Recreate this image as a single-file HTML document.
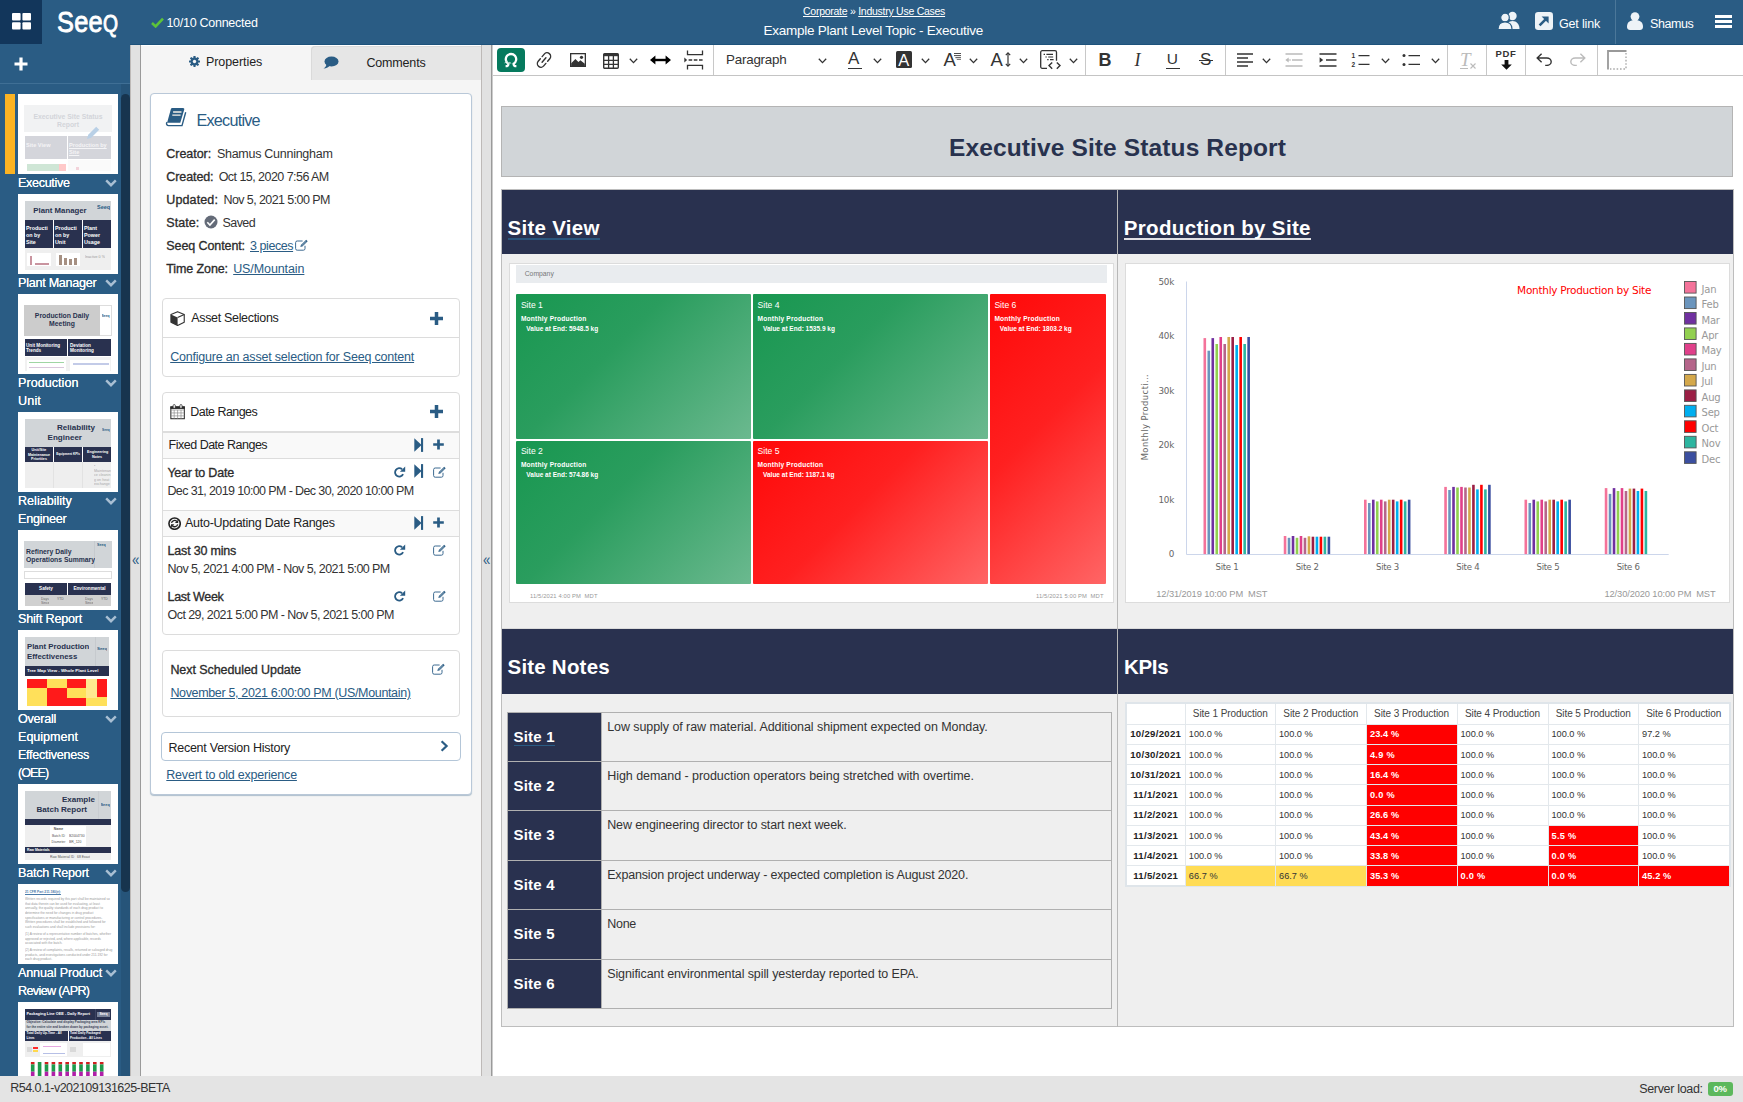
<!DOCTYPE html>
<html lang="en">
<head>
<meta charset="utf-8">
<title>Example Plant Level Topic - Executive</title>
<style>
*{box-sizing:border-box;margin:0;padding:0}
html,body{width:1743px;height:1102px;overflow:hidden;background:#fff}
body{font-family:"Liberation Sans",sans-serif;font-size:12.5px;letter-spacing:-0.27px;color:#333;position:relative}
.abs{position:absolute}
.t{position:absolute;white-space:nowrap;line-height:16px;height:16px}
a{color:inherit}
/* header */
#hdr{left:0;top:0;width:1743px;height:45px;background:#2a5c84;border-bottom:1px solid #1d527b}
#home{left:0;top:0;width:42px;height:44px;background:#12365b}
.hw{color:#fff}
/* sidebar */
#side{left:0;top:44px;width:130px;height:1033px;background:#2a5c84;overflow:hidden}

#side .th{letter-spacing:0;position:absolute;left:18px;width:100px;height:80px;background:#fff;overflow:hidden}
#side .lb{position:absolute;left:18px;width:90px;color:#fff;line-height:18px;font-size:12.6px;letter-spacing:-0.2px;white-space:nowrap;text-shadow:0 0 0.4px #fff}
#side .cv{position:absolute;left:105px;width:12px;height:8px}
.th div{position:absolute;overflow:hidden}
.th .g{background:#d1d5d8}
.th .n{background:#29314f;color:#fff;font-weight:bold}
.th .tt{color:#28324e;font-weight:bold;text-align:center;white-space:nowrap}
/* footer */
#foot{left:0;top:1076px;width:1743px;height:26px;background:#e4e4e4}
/* splitters */
.split{background:#e1e1e1;border-left:1px solid #bdb9b7;border-right:1px solid #9a9a9a}
/* panel */
#panel{left:141px;top:45px;width:340px;height:1032px;background:#f5f5f5}

#panel .t{font-size:12.5px}
.lk{color:#2a5c84;text-decoration:underline}
.b{font-weight:normal;color:#2b2b2b;-webkit-text-stroke:0.320px #2b2b2b}
.card{position:absolute;background:#fff;border:1px solid #dcdcdc;border-radius:4px}
.ic{position:absolute}
/* editor */
#editor{left:492px;top:45px;width:1251px;height:1032px;background:#fff;border-left:1px solid #ccc}
</style>
</head>
<body>
<div id="hdr" class="abs">
<div id="home" class="abs"></div>
<svg class="abs" style="left:12px;top:13px" width="19" height="17" viewBox="0 0 19 17"><g fill="#fff"><rect x="0" y="0" width="8.6" height="7.4" rx="1"/><rect x="10.4" y="0" width="8.6" height="7.4" rx="1"/><rect x="0" y="9.2" width="8.6" height="7.4" rx="1"/><rect x="10.4" y="9.2" width="8.6" height="7.4" rx="1"/></g></svg>
<div class="t" id="logo" style="left:56.800px;top:5.300px;height:34px;line-height:34px;font-size:30.200px;font-weight:normal;-webkit-text-stroke:0.900px #fff;color:#fff;letter-spacing:0.300px;transform-origin:0 0;transform:scaleX(0.840)">See<span style="font-size:23px;letter-spacing:0">Q</span></div>
<svg class="abs" style="left:150.500px;top:16.500px" width="13" height="11" viewBox="0 0 13 11"><path d="M1 6 L4.6 9.4 L12 1.6" fill="none" stroke="#5cc23a" stroke-width="2.6"/></svg>
<div class="t hw" style="left:166.400px;top:15px;--w:91.2px;letter-spacing:-0.268px">10/10 Connected</div>
<div class="t" style="left:803px;top:4px;font-size:10.500px;line-height:14px;height:14px;color:#fff;--w:142.100px;letter-spacing:-0.264px"><a style="text-decoration:underline">Corporate</a> » <a style="text-decoration:underline">Industry Use Cases</a></div>
<div class="t hw" style="left:763.500px;top:22.500px;font-size:13.500px;--w:219.6px;letter-spacing:-0.244px">Example Plant Level Topic - Executive</div>
<svg class="abs" style="left:1498px;top:11px" width="22" height="18" viewBox="0 0 22 18"><g fill="#eef3f7"><circle cx="14.5" cy="5" r="4.2"/><path d="M8.5 18c0-5 2-8 6-8s7 3 7 8z"/></g><g fill="#eef3f7" stroke="#2a5c84" stroke-width="1.2"><circle cx="7" cy="6.5" r="4.3"/><path d="M0 18.6c0-5 2.4-7.6 7-7.6s7 2.6 7 7.6z"/></g></svg>
<svg class="abs" style="left:1535px;top:12px" width="18" height="18" viewBox="0 0 18 18"><rect x="0" y="0" width="18" height="18" rx="3.2" fill="#eef3f7"/><path d="M4.6 13.4L11.6 6.4" stroke="#2a5c84" stroke-width="2.6" fill="none"/><path d="M6.6 4.4h7v7z" fill="#2a5c84"/></svg>
<div class="t hw" style="left:1559px;top:15.800px;--w:41.0px;letter-spacing:-0.174px">Get link</div>
<div class="abs" style="left:1615px;top:0;width:1px;height:44px;background:#4b7799"></div>
<svg class="abs" style="left:1627px;top:12px" width="16" height="18" viewBox="0 0 16 18"><g fill="#eef3f7"><circle cx="8" cy="4.6" r="4.4"/><path d="M0 15c0-5 3-7 8-7s8 2 8 7c0 2-1.5 3-3 3H3c-1.500 0-3-1-3-3z"/></g></svg>
<div class="t hw" style="left:1650px;top:15.800px;--w:43.4px;letter-spacing:-0.410px">Shamus</div>
<div class="abs" style="left:1715px;top:15px;width:17px;height:13px;border-top:3px solid #fff;border-bottom:3px solid #fff"><div style="margin-top:2px;height:3px;background:#fff"></div></div>
</div>
<div id="side" class="abs">
<svg class="abs" style="left:14px;top:13px" width="14" height="14" viewBox="0 0 14 14"><path d="M7 0.500v13M0.500 7h13" stroke="#fff" stroke-width="3.2"/></svg>
<div class="abs" style="left:0;top:39px;width:130px;height:1px;background:#3f6f95"></div>
<div class="abs" style="left:121px;top:40px;width:9px;height:993px;background:#265479"></div>
<div class="abs" style="left:121px;top:50px;width:9px;height:798px;background:#17344e;border-radius:5px 5px 5px 5px"></div>
<div class="abs" style="left:5px;top:50px;width:10px;height:80px;background:#fbb323"></div>
<div class="th" style="top:50px">
<div style="left:6px;top:11px;width:88px;height:27px;background:#f1f2f3"></div>
<div class="tt" style="left:6px;top:18.500px;width:88px;font-size:6.832px;line-height:8px;color:#d3d5da;white-space:normal">Executive Site Status Report</div>
<div style="left:7px;top:42px;width:42px;height:23px;background:#d4d5db"></div>
<div style="left:50px;top:42px;width:43px;height:23px;background:#d4d5db"></div>
<div style="left:8px;top:48px;font-size:5.612px;line-height:7px;color:#f4f4f6;font-weight:bold">Site View</div>
<div style="left:51px;top:48px;width:42px;font-size:5.612px;line-height:7px;color:#f4f4f6;font-weight:bold;text-decoration:underline">Production by Site</div>
<div style="left:9px;top:70px;width:32px;height:7px;background:#cfe6d6"></div>
<div style="left:41px;top:70px;width:7px;height:7px;background:#ffc9c9"></div>
<div style="left:50px;top:66px;width:43px;height:11px;background:#fafafa"></div>
<div style="left:58px;top:73px;width:3px;height:3px;background:#f3d3da"></div>
<svg style="position:absolute;left:68px;top:31px" width="15" height="15" viewBox="0 0 15 15"><path d="M1 14l1.200-4.200 8-8 3 3-8 8z" fill="#b9d0e6"/></svg>
</div><div class="lb" style="top:130px;--w:51.600px;letter-spacing:-0.334px">Executive</div><svg class="cv" style="top:135px" viewBox="0 0 12 8"><path d="M1.2 1.4L6 6.2L10.800 1.4" fill="none" stroke="#a9bfd3" stroke-width="2.4"/></svg><div class="th" style="top:150px">
<div class="g" style="left:7px;top:7px;width:86px;height:19px"></div>
<div class="tt" style="left:7px;top:12px;width:70px;font-size:7.808px;line-height:9px">Plant Manager</div>
<div style="left:79px;top:10px;font-size:5.490px;line-height:6px;color:#2a5c84;font-weight:bold">Seeq</div>
<div class="n" style="left:7px;top:26px;width:28px;height:28px;font-size:5.368px;line-height:7px;padding:5px 0 0 1px">Producti<br>on by<br>Site</div>
<div class="n" style="left:36px;top:26px;width:28px;height:28px;font-size:5.368px;line-height:7px;padding:5px 0 0 1px">Producti<br>on by<br>Unit</div>
<div class="n" style="left:65px;top:26px;width:28px;height:28px;font-size:5.368px;line-height:7px;padding:5px 0 0 1px">Plant<br>Power<br>Usage</div>
<div style="left:7px;top:54px;width:86px;height:22px;background:#efefef"></div>
<div style="left:9px;top:59px;width:24px;height:13px;background:#fff"></div>
<div style="left:38px;top:59px;width:24px;height:13px;background:#fff"></div>
<div style="left:12px;top:62px;width:2px;height:9px;background:#c9949f"></div>
<div style="left:17px;top:69px;width:14px;height:2px;background:#c9949f"></div>
<div style="left:41px;top:61px;width:3px;height:10px;background:#a69082"></div>
<div style="left:46px;top:64px;width:3px;height:7px;background:#a69082"></div>
<div style="left:51px;top:65px;width:3px;height:6px;background:#a69082"></div>
<div style="left:56px;top:64px;width:3px;height:7px;background:#a69082"></div>
<div style="left:67px;top:61px;font-size:3.660px;line-height:4px;color:#999">Inactive 0 %</div>
</div><div class="lb" style="top:230px;--w:78.5px;letter-spacing:-0.263px">Plant Manager</div><svg class="cv" style="top:235px" viewBox="0 0 12 8"><path d="M1.2 1.4L6 6.2L10.800 1.4" fill="none" stroke="#a9bfd3" stroke-width="2.4"/></svg><div class="th" style="top:250px">
<div style="left:6px;top:11px;width:88px;height:31px;background:#fff;border:1px solid #ddd"></div>
<div style="left:6px;top:11px;width:76px;height:31px;background:#cccccc"></div>
<div class="tt" style="left:6px;top:18px;width:76px;font-size:6.832px;line-height:8.400px;white-space:nowrap">Production Daily<br>Meeting</div>
<div style="left:83.500px;top:20px;font-size:3.400px;line-height:5px;color:#2a5c84;font-weight:bold">Seeq</div>
<div class="n" style="left:7px;top:45px;width:42px;height:17px;font-size:4.636px;line-height:5px;padding:4px 0 0 1px">Unit Monitoring Trends</div>
<div class="n" style="left:50px;top:45px;width:43px;height:17px;font-size:4.636px;line-height:5px;padding:4px 8px 0 2px">Deviation Monitoring</div>
<div style="left:7px;top:63px;width:86px;height:14px;background:#f1f1f1"></div>
<div style="left:9px;top:66px;width:39px;height:11px;background:#fff"></div>
<div style="left:52px;top:66px;width:40px;height:11px;background:#fff"></div>
<div style="left:11px;top:68px;width:35px;height:1px;background:#9fd6a3"></div>
<div style="left:11px;top:73px;width:35px;height:1px;background:#d9c7dc"></div>
<div style="left:55px;top:69px;width:36px;height:2px;background:#c3cbe8"></div>
</div><div class="lb" style="top:330px;--w:60.5px;letter-spacing:0.028px">Production</div><div class="lb" style="top:348px;--w:23.0px;letter-spacing:0.148px">Unit</div><svg class="cv" style="top:335px" viewBox="0 0 12 8"><path d="M1.2 1.4L6 6.2L10.800 1.4" fill="none" stroke="#a9bfd3" stroke-width="2.4"/></svg><div class="th" style="top:368px">
<div class="g" style="left:7px;top:7px;width:86px;height:28px"></div>
<div class="tt" style="left:20px;top:11px;width:60px;font-size:8.052px;line-height:10px;text-align:right;white-space:normal"><span style="padding-right:3px">Reliability</span><br><span style="padding-right:16px">Engineer</span></div>
<div style="left:84px;top:16px;font-size:3.200px;line-height:5px;color:#2a5c84;font-weight:bold">Seeq</div>
<div class="n" style="left:7px;top:35px;width:28px;height:15px;font-size:3.660px;line-height:4.600px;text-align:center;padding:1px 3px 0">Unit/Site Maintenance Priorities</div>
<div class="n" style="left:36px;top:35px;width:28px;height:15px;font-size:3.100px;line-height:15px;text-align:center">Equipment KPIs</div>
<div class="n" style="left:65px;top:35px;width:28px;height:15px;font-size:3.660px;line-height:4.600px;text-align:center;padding:3px 4px 0">Engineering Notes</div>
<div style="left:7px;top:50px;width:86px;height:26px;background:#eeeeee"></div>
<div style="left:35px;top:50px;width:1px;height:26px;background:#e2e2e2"></div>
<div style="left:64px;top:50px;width:1px;height:26px;background:#e2e2e2"></div>
<div style="left:76px;top:52px;width:17px;font-size:3.660px;line-height:4.600px;color:#a9a9a9">• Maintenan ce cleanin g on heat exchange</div>
</div><div class="lb" style="top:448px;--w:53.9px;letter-spacing:-0.001px">Reliability</div><div class="lb" style="top:466px;--w:48.5px;letter-spacing:-0.240px">Engineer</div><svg class="cv" style="top:453px" viewBox="0 0 12 8"><path d="M1.2 1.4L6 6.2L10.800 1.4" fill="none" stroke="#a9bfd3" stroke-width="2.4"/></svg><div class="th" style="top:486px">
<div class="g" style="left:6px;top:11px;width:88px;height:27px"></div>
<div style="left:76px;top:11px;width:1px;height:27px;background:#c6cace"></div>
<div class="tt" style="left:8px;top:18px;font-size:6.832px;line-height:8.400px;text-align:left">Refinery Daily<br>Operations Summary</div>
<div style="left:79px;top:13px;font-size:3.660px;line-height:4px;color:#2a5c84;font-weight:bold">Seeq</div>
<div style="left:6px;top:41px;width:88px;height:8px;background:#fff;border:1px solid #ddd"></div>
<div class="n" style="left:7px;top:53px;width:42px;height:12px;font-size:4.636px;line-height:12px;text-align:center">Safety</div>
<div class="n" style="left:50px;top:53px;width:43px;height:12px;font-size:4.636px;line-height:12px;text-align:center">Environmental</div>
<div style="left:7px;top:65px;width:86px;height:11px;background:#d0d0d0"></div>
<div style="left:23px;top:67px;width:8px;font-size:3.416px;line-height:4.400px;color:#666;text-align:center">Days Since</div>
<div style="left:39px;top:67px;font-size:3.416px;line-height:4.400px;color:#666">YTD</div>
<div style="left:67px;top:67px;width:8px;font-size:3.416px;line-height:4.400px;color:#666;text-align:center">Days Since</div>
<div style="left:83px;top:67px;font-size:3.416px;line-height:4.400px;color:#666">YTD</div>
</div><div class="lb" style="top:566px;--w:64.1px;letter-spacing:-0.200px">Shift Report</div><svg class="cv" style="top:571px" viewBox="0 0 12 8"><path d="M1.2 1.4L6 6.2L10.800 1.4" fill="none" stroke="#a9bfd3" stroke-width="2.4"/></svg><div class="th" style="top:586px">
<div class="g" style="left:7px;top:7px;width:84px;height:29px"></div>
<div style="left:77px;top:7px;width:1px;height:29px;background:#c6cace"></div>
<div class="tt" style="left:9px;top:12px;font-size:7.808px;line-height:10px;text-align:left">Plant Production<br>Effectiveness</div>
<div style="left:79px;top:16px;font-size:4.392px;line-height:5px;color:#2a5c84;font-weight:bold">Seeq</div>
<div class="n" style="left:7px;top:36px;width:84px;height:10px;font-size:4.392px;line-height:10px;padding-left:2px">Tree Map View - Whole Plant Level</div>
<div style="left:9px;top:49px;width:80px;height:27px;background:#ffe05a"></div>
<div style="left:9px;top:49px;width:20px;height:9px;background:#ff1a1a"></div>
<div style="left:49px;top:49px;width:19px;height:9px;background:#ff1a1a"></div>
<div style="left:29px;top:58px;width:20px;height:18px;background:#ff1a1a"></div>
<div style="left:49px;top:68px;width:19px;height:8px;background:#ff1a1a"></div>
<div style="left:79px;top:49px;width:10px;height:18px;background:#ff1a1a"></div>
<div style="left:68px;top:49px;width:11px;height:19px;background:#ffe98f"></div>
</div><div class="lb" style="top:666px;--w:38.1px;letter-spacing:-0.256px">Overall</div><div class="lb" style="top:684px;--w:60.0px;letter-spacing:-0.024px">Equipment</div><div class="lb" style="top:702px;--w:70.9px;letter-spacing:-0.290px">Effectiveness</div><div class="lb" style="top:720px;--w:30.1px;letter-spacing:-0.977px">(OEE)</div><svg class="cv" style="top:671px" viewBox="0 0 12 8"><path d="M1.2 1.4L6 6.2L10.800 1.4" fill="none" stroke="#a9bfd3" stroke-width="2.4"/></svg><div class="th" style="top:740px">
<div class="g" style="left:7px;top:7px;width:86px;height:28px"></div>
<div style="left:80px;top:7px;width:1px;height:28px;background:#c9cdd1"></div>
<div class="tt" style="left:7px;top:11px;width:72px;font-size:8.052px;line-height:10px;text-align:right;white-space:normal"><span style="padding-right:2px">Example</span><br><span style="padding-right:10px">Batch Report</span></div>
<div style="left:82.500px;top:18px;font-size:3.900px;line-height:5px;color:#2a5c84;font-weight:bold">Seeq</div>
<div class="n" style="left:7px;top:35px;width:86px;height:6px"></div>
<div style="left:7px;top:41px;width:86px;height:22px;background:#efefef"></div>
<div style="left:32px;top:42px;width:36px;height:20px;background:#fff"></div>
<div style="left:32px;top:42px;width:17px;font-size:3.416px;line-height:6.600px;color:#555;text-align:center;font-weight:bold">Name<br><span style="font-weight:normal">Batch ID</span><br><span style="font-weight:normal">Diameter</span></div>
<div style="left:51px;top:48.600px;width:17px;font-size:3.416px;line-height:6.600px;color:#555">B2004730<br>BR_120</div>
<div class="n" style="left:7px;top:63px;width:86px;height:6px;font-size:3.416px;line-height:6px;padding-left:2px">Raw Materials</div>
<div style="left:7px;top:69px;width:86px;height:7px;background:#efefef"></div>
<div style="left:32px;top:70px;font-size:3.416px;line-height:6px;color:#555">Raw Material ID &#160; 68 Exact</div>
</div><div class="lb" style="top:820px;--w:70.9px;letter-spacing:-0.218px">Batch Report</div><svg class="cv" style="top:825px" viewBox="0 0 12 8"><path d="M1.2 1.4L6 6.2L10.800 1.4" fill="none" stroke="#a9bfd3" stroke-width="2.4"/></svg><div class="th" style="top:840px">
<div style="left:7px;top:6px;font-size:3.250px;line-height:5px;color:#4a7aa8;text-decoration:underline;font-weight:bold">21 CFR Part 211.180(e):</div>
<div style="left:7px;top:13px;width:88px;font-size:3.250px;line-height:4.640px;color:#9a9a9a;white-space:normal">Written records required by this part shall be maintained so that data therein can be used for evaluating, at least annually, the quality standards of each drug product to determine the need for changes in drug product specifications or manufacturing or control procedures. Written procedures shall be established and followed for such evaluations and shall include provisions for:</div>
<div style="left:7px;top:48px;width:88px;font-size:3.250px;line-height:4.640px;color:#9a9a9a;white-space:normal">(1) A review of a representative number of batches, whether approved or rejected, and, where applicable, records associated with the batch.</div>
<div style="left:7px;top:64px;width:88px;font-size:3.250px;line-height:4.640px;color:#9a9a9a;white-space:normal">(2) A review of complaints, recalls, returned or salvaged drug products, and investigations conducted under 211.192 for each drug product.</div>
</div><div class="lb" style="top:920px;--w:84.1px;letter-spacing:-0.145px">Annual Product</div><div class="lb" style="top:938px;--w:71.4px;letter-spacing:-0.640px">Review (APR)</div><svg class="cv" style="top:925px" viewBox="0 0 12 8"><path d="M1.2 1.4L6 6.2L10.800 1.4" fill="none" stroke="#a9bfd3" stroke-width="2.4"/></svg><div class="th" style="top:958px">
<div class="n" style="left:7px;top:7px;width:86px;height:10.500px;font-size:3.850px;line-height:10.500px;padding-left:1.500px;white-space:nowrap">Packaging Line OEE - Daily Report</div>
<div style="left:77px;top:7px;width:1px;height:10.500px;background:#3d4563"></div>
<div style="left:79px;top:9.500px;width:13px;height:5px;background:#7b8499;color:#fff;font-size:3.400px;line-height:5px;text-align:center;font-weight:bold">Seeq</div>
<div style="left:7px;top:17.500px;width:86px;height:11px;background:#d1d5d8;color:#3a4156;font-size:3.100px;line-height:4.800px;padding:0.700px 0 0 1.500px;font-weight:bold;white-space:nowrap">Objective: Calculate and display Packaging area KPIs<br>for the entire site and broken down by packaging asset.</div>
<div class="n" style="left:7px;top:28.600px;width:43px;height:10.400px;font-size:3.100px;line-height:4.600px;padding:0.800px 0 0 1.500px;white-space:nowrap">Total Daily Up-Time - All<br>Lines</div>
<div class="n" style="left:50.500px;top:28.600px;width:42.500px;height:10.400px;font-size:3.100px;line-height:4.600px;padding:0.800px 0 0 1.500px;white-space:nowrap">Total Daily Packaged<br>Production - All Lines</div>
<div style="left:7px;top:39px;width:86px;height:16px;background:#efefef"></div>
<div style="left:22px;top:40.500px;width:27px;height:13.500px;background:#fff"></div>
<div style="left:65px;top:40.500px;width:27px;height:13.500px;background:#fff"></div>
<div style="left:8.500px;top:45px;width:5.500px;height:5px;background:#d9d9d9"></div>
<div style="left:15px;top:45px;width:5px;height:2.200px;background:#ff2a2a"></div>
<div style="left:15px;top:48px;width:5px;height:2.200px;background:#ffd84d"></div>
<div style="left:52px;top:45px;width:5.500px;height:5px;background:#d9d9d9"></div>
<div style="left:25px;top:43.500px;width:18px;height:1px;background:#e6a8e0"></div>
<div style="left:25px;top:50.500px;width:22px;height:1.600px;background:#b6bfe6"></div>
<div style="left:8px;top:55.500px;width:84px;height:21px;background:#fff"></div>
<svg style="position:absolute;left:0;top:0" width="100" height="80" viewBox="0 0 100 80"><rect x="12.9" y="60" width="3.600" height="2.400" fill="#d01f1f"/><rect x="12.9" y="62.400" width="3.600" height="7.300" fill="#1f9a4c"/><rect x="12.9" y="69.700" width="3.600" height="10.300" fill="#b01fa8"/><rect x="19.8" y="60" width="3.600" height="20" fill="#1f9a4c"/><rect x="26.7" y="60" width="3.600" height="2.400" fill="#d01f1f"/><rect x="26.7" y="62.400" width="3.600" height="7.300" fill="#1f9a4c"/><rect x="26.7" y="69.700" width="3.600" height="10.300" fill="#b01fa8"/><rect x="33.6" y="60" width="3.600" height="2.400" fill="#d01f1f"/><rect x="33.6" y="62.400" width="3.600" height="7.300" fill="#1f9a4c"/><rect x="33.6" y="69.700" width="3.600" height="10.300" fill="#b01fa8"/><rect x="40.5" y="60" width="3.600" height="2.400" fill="#d01f1f"/><rect x="40.5" y="62.400" width="3.600" height="7.300" fill="#1f9a4c"/><rect x="40.5" y="69.700" width="3.600" height="10.300" fill="#b01fa8"/><rect x="47.4" y="60" width="3.600" height="2.400" fill="#d01f1f"/><rect x="47.4" y="62.400" width="3.600" height="7.300" fill="#1f9a4c"/><rect x="47.4" y="69.700" width="3.600" height="10.300" fill="#b01fa8"/><rect x="54.3" y="60" width="3.600" height="2.400" fill="#d01f1f"/><rect x="54.3" y="62.400" width="3.600" height="7.300" fill="#1f9a4c"/><rect x="54.3" y="69.700" width="3.600" height="10.300" fill="#b01fa8"/><rect x="61.2" y="60" width="3.600" height="2.400" fill="#d01f1f"/><rect x="61.2" y="62.400" width="3.600" height="7.300" fill="#1f9a4c"/><rect x="61.2" y="69.700" width="3.600" height="10.300" fill="#b01fa8"/><rect x="68.1" y="60" width="3.600" height="2.400" fill="#d01f1f"/><rect x="68.1" y="62.400" width="3.600" height="7.300" fill="#1f9a4c"/><rect x="68.1" y="69.700" width="3.600" height="10.300" fill="#b01fa8"/><rect x="75.0" y="60" width="3.600" height="2.400" fill="#d01f1f"/><rect x="75.0" y="62.400" width="3.600" height="7.300" fill="#1f9a4c"/><rect x="75.0" y="69.700" width="3.600" height="10.300" fill="#b01fa8"/><rect x="81.9" y="60" width="3.600" height="2.400" fill="#d01f1f"/><rect x="81.9" y="62.400" width="3.600" height="7.300" fill="#1f9a4c"/><rect x="81.9" y="69.700" width="3.600" height="10.300" fill="#b01fa8"/></svg>
</div>
</div>
<div class="abs split" style="left:130px;top:45px;width:11px;height:1032px"></div>
<div class="t" style="left:131.700px;top:550.600px;font-size:16.500px;color:#2a5c84;letter-spacing:0;transform-origin:0 50%;transform:scaleX(0.800)">«</div>
<div id="panel" class="abs"></div>
<div id="pc" class="abs" style="left:0;top:0">
<div class="abs" style="left:141px;top:45px;width:340px;height:1px;background:#fff"></div>
<div class="abs" style="left:311px;top:45.500px;width:170px;height:34.500px;background:#e6e6e6;border-radius:4px 0 0 0;box-shadow:inset 1px 1px 0 #dadada"></div>
<svg class="ic" style="left:189.200px;top:56px" width="11" height="11" viewBox="0 0 13 13"><g fill="#2a5c84"><circle cx="6.500" cy="6.500" r="4.600"/><g id="gt"><rect x="5.200" y="0" width="2.600" height="13" rx="0.500"/></g><use href="#gt" transform="rotate(45 6.500 6.500)"/><use href="#gt" transform="rotate(90 6.500 6.500)"/><use href="#gt" transform="rotate(135 6.500 6.500)"/></g><circle cx="6.500" cy="6.500" r="2" fill="#f5f5f5"/></svg>
<div class="t " style="left:206.0px;top:53.6px;color:#222;--w:56.2px;letter-spacing:-0.078px">Properties</div>
<svg class="ic" style="left:323px;top:56px" width="16" height="13" viewBox="0 0 16 13"><ellipse cx="8.500" cy="5.500" rx="7" ry="5" fill="#2a5c84"/><path d="M3.500 7.500c0 2.500-1.500 4.300-3 5 3 0 5.500-1.500 6.500-3z" fill="#2a5c84"/></svg>
<div class="t " style="left:366.5px;top:54.6px;color:#222;--w:59.0px;letter-spacing:-0.180px">Comments</div>
<div class="card" style="left:150px;top:93px;width:322px;height:702px;border-color:#b9c8d8;box-shadow:0 1px 1px rgba(42,92,132,.35)"></div>
<svg class="ic" style="left:165px;top:108px" width="22" height="19" viewBox="0 0 22 19"><path d="M7.200 0.100h10.900a1.200 1.200 0 0 1 1.160 1.500L15.300 14.700H2.100L5.900 1.100a1.400 1.400 0 0 1 1.300-1z" fill="#2a5c84"/><path d="M20.700 4.300L17 17.600H3.500a2 2 0 0 1-1.900-2.600l0.500-0.800" fill="none" stroke="#2a5c84" stroke-width="1.400" stroke-linejoin="round"/><path d="M8.100 4h8.400M7.300 7.100h8.300" stroke="#f6efe8" stroke-width="1.400"/></svg>
<div class="t " style="left:196.5px;top:111.5px;font-size:16.200px;letter-spacing:-0.400px;color:#2a5c84;line-height:20px;height:20px;margin-top:-2px;--w:63.300px;letter-spacing:-0.765px">Executive</div>
<div class="t b" style="left:166.3px;top:145.9px;--w:44.9px;letter-spacing:-0.032px">Creator:</div>
<div class="t " style="left:216.9px;top:145.9px;--w:115.7px;letter-spacing:-0.266px">Shamus Cunningham</div>
<div class="t b" style="left:166.3px;top:168.8px;--w:47.2px;letter-spacing:-0.094px">Created:</div>
<div class="t " style="left:218.7px;top:168.8px;--w:110.0px;letter-spacing:-0.546px">Oct 15, 2020 7:56 AM</div>
<div class="t b" style="left:166.3px;top:191.7px;--w:51.7px;letter-spacing:0.121px">Updated:</div>
<div class="t " style="left:223.5px;top:191.7px;--w:106.2px;letter-spacing:-0.591px">Nov 5, 2021 5:00 PM</div>
<div class="t b" style="left:166.3px;top:214.6px;--w:32.9px;letter-spacing:0.038px">State:</div>
<div class="t " style="left:222.6px;top:214.6px;--w:32.4px;letter-spacing:-0.611px">Saved</div>
<svg class="ic" style="left:204px;top:215px" width="14" height="14" viewBox="0 0 14 14"><circle cx="7" cy="7" r="6.500" fill="#646b78"/><path d="M3.300 7.300l2.600 2.700 4.800-5.400" fill="none" stroke="#fff" stroke-width="1.600"/></svg>
<div class="t b" style="left:166.3px;top:237.8px;--w:78.7px;letter-spacing:-0.094px">Seeq Content:</div>
<div class="t lk" style="left:250.0px;top:237.8px;--w:43.1px;letter-spacing:-0.433px">3 pieces</div>
<svg class="ic" style="left:295.3px;top:239.0px" width="14" height="12" viewBox="0 0 14 12"><path d="M10 6.800V9.600a1.600 1.600 0 0 1-1.600 1.600H2.200A1.600 1.600 0 0 1 0.600 9.600V3.600A1.600 1.600 0 0 1 2.200 2H7.600" fill="none" stroke="#3d6b91" stroke-width="1"/><path d="M5.400 8l0.500-2 5.300-5.200 1.500 1.500-5.300 5.200z" fill="#2a5c84"/><path d="M6.500 6.900l4.700-4.600" stroke="#fff" stroke-width="0.500"/></svg>
<div class="t b" style="left:166.3px;top:260.7px;--w:61.7px;letter-spacing:-0.107px">Time Zone:</div>
<div class="t lk" style="left:233.2px;top:260.7px;--w:71.2px;letter-spacing:-0.097px">US/Mountain</div>
<div class="card" style="left:162px;top:298px;width:298px;height:79px"></div>
<div class="abs" style="left:163px;top:337px;width:296px;height:1px;background:#dcdcdc"></div>
<svg class="ic" style="left:169.500px;top:311px" width="15.200" height="15.200" viewBox="0 0 16 16"><path d="M8 0.700L15 3.600V11.800L8 15.300 1 11.800V3.600z" fill="#fff" stroke="#333" stroke-width="1.200" stroke-linejoin="round"/><path d="M1 3.600L8 6.800V15.300L1 11.800z" fill="#333"/><path d="M8 6.800L15 3.600" stroke="#333" stroke-width="1.200"/></svg>
<div class="t " style="left:191.2px;top:309.9px;color:#222;--w:87.3px;letter-spacing:-0.320px">Asset Selections</div>
<svg class="ic" style="left:430.4px;top:311.6px" width="13" height="13" viewBox="0 0 13 13"><path d="M6.500 0.100v12.800M0 6.500h13" stroke="#2a5c84" stroke-width="3.500"/></svg>
<div class="t lk" style="left:170.2px;top:349.0px;--w:243.9px;letter-spacing:-0.201px">Configure an asset selection for Seeq content</div>
<div class="card" style="left:162px;top:392px;width:298px;height:243px"></div>
<svg class="ic" style="left:169.600px;top:404.300px" width="15.200" height="15.400" viewBox="0 0 16 16"><rect x="0.900" y="2.800" width="14.200" height="12.600" fill="#fff" stroke="#2b2b2b" stroke-width="1.100"/><path d="M0.900 6.200h14.200M0.900 9.300h14.200M0.900 12.400h14.200M4.400 6.200v9.200M8 6.200v9.200M11.600 6.200v9.200" stroke="#8a8a8a" stroke-width="0.700"/><path d="M0.400 3.900h15.200" stroke="#2b2b2b" stroke-width="2.400"/><rect x="3.300" y="0.500" width="2.300" height="4" rx="1.100" fill="#fff" stroke="#2b2b2b" stroke-width="0.800"/><rect x="10.400" y="0.500" width="2.300" height="4" rx="1.100" fill="#fff" stroke="#2b2b2b" stroke-width="0.800"/></svg>
<div class="t " style="left:190.3px;top:403.8px;color:#222;--w:66.9px;letter-spacing:-0.552px">Date Ranges</div>
<svg class="ic" style="left:430.4px;top:405.4px" width="13" height="13" viewBox="0 0 13 13"><path d="M6.500 0.100v12.800M0 6.500h13" stroke="#2a5c84" stroke-width="3.500"/></svg>
<div class="abs" style="left:163px;top:431px;width:296px;height:2px;background:#ddd"></div>
<div class="abs" style="left:163px;top:433px;width:296px;height:25px;background:#f9f9f9"></div>
<div class="abs" style="left:163px;top:458px;width:296px;height:1px;background:#ddd"></div>
<div class="t " style="left:168.6px;top:437.0px;color:#222;--w:98.5px;letter-spacing:-0.501px">Fixed Date Ranges</div>
<svg class="ic" style="left:413.8px;top:438.0px" width="10" height="14" viewBox="0 0 10 14"><path d="M0.300 0.200L7.600 7 0.300 13.800z" fill="#2a5c84"/><rect x="7" y="0.100" width="2.100" height="13.800" fill="#2a5c84"/></svg>
<svg class="ic" style="left:433.4px;top:439.0px" width="11" height="11" viewBox="0 0 11 11"><path d="M5.500 0.400v10.200M0.200 5.500h10.600" stroke="#2a5c84" stroke-width="2.700"/></svg>
<div class="t b" style="left:167.4px;top:464.6px;--w:66.5px;letter-spacing:-0.211px">Year to Date</div>
<svg class="ic" style="left:393.6px;top:466.4px" width="12" height="12" viewBox="0 0 12 12"><path d="M8.100 3.250A4.200 4.200 0 1 0 9.100 8.200" fill="none" stroke="#2a5c84" stroke-width="1.800"/><path d="M11.200 0.400v5.300H5.900z" fill="#2a5c84"/></svg>
<svg class="ic" style="left:413.8px;top:464.0px" width="10" height="14" viewBox="0 0 10 14"><path d="M0.300 0.200L7.600 7 0.300 13.800z" fill="#2a5c84"/><rect x="7" y="0.100" width="2.100" height="13.800" fill="#2a5c84"/></svg>
<svg class="ic" style="left:433.3px;top:466.0px" width="14" height="12" viewBox="0 0 14 12"><path d="M10 6.800V9.600a1.600 1.600 0 0 1-1.600 1.600H2.200A1.600 1.600 0 0 1 0.600 9.600V3.600A1.600 1.600 0 0 1 2.200 2H7.600" fill="none" stroke="#3d6b91" stroke-width="1"/><path d="M5.400 8l0.500-2 5.300-5.200 1.500 1.500-5.300 5.200z" fill="#2a5c84"/><path d="M6.500 6.900l4.700-4.600" stroke="#fff" stroke-width="0.500"/></svg>
<div class="t " style="left:167.4px;top:483.0px;--w:246.1px;letter-spacing:-0.615px">Dec 31, 2019 10:00 PM - Dec 30, 2020 10:00 PM</div>
<div class="abs" style="left:163px;top:510px;width:296px;height:1px;background:#ddd"></div>
<div class="abs" style="left:163px;top:511px;width:296px;height:25px;background:#f9f9f9"></div>
<div class="abs" style="left:163px;top:536px;width:296px;height:1px;background:#ddd"></div>
<svg class="ic" style="left:167.800px;top:516.600px" width="13.200" height="13.200" viewBox="0 0 14 14"><circle cx="7" cy="7" r="6" fill="none" stroke="#222" stroke-width="1.700"/><path d="M3.700 6.200A3.400 3.400 0 0 1 9.400 4.700" fill="none" stroke="#222" stroke-width="1.400"/><path d="M10.800 2.900v3.500H7.300z" fill="#222"/><path d="M10.300 7.800A3.400 3.400 0 0 1 4.600 9.300" fill="none" stroke="#222" stroke-width="1.400"/><path d="M3.200 11.100V7.600H6.700z" fill="#222"/></svg>
<div class="t " style="left:185.0px;top:515.0px;color:#222;--w:149.7px;letter-spacing:-0.266px">Auto-Updating Date Ranges</div>
<svg class="ic" style="left:413.8px;top:516.0px" width="10" height="14" viewBox="0 0 10 14"><path d="M0.300 0.200L7.600 7 0.300 13.800z" fill="#2a5c84"/><rect x="7" y="0.100" width="2.100" height="13.800" fill="#2a5c84"/></svg>
<svg class="ic" style="left:433.4px;top:517.0px" width="11" height="11" viewBox="0 0 11 11"><path d="M5.500 0.400v10.200M0.200 5.500h10.600" stroke="#2a5c84" stroke-width="2.700"/></svg>
<div class="t b" style="left:167.6px;top:542.8px;--w:68.6px;letter-spacing:-0.190px">Last 30 mins</div>
<svg class="ic" style="left:393.6px;top:544.4px" width="12" height="12" viewBox="0 0 12 12"><path d="M8.100 3.250A4.200 4.200 0 1 0 9.100 8.200" fill="none" stroke="#2a5c84" stroke-width="1.800"/><path d="M11.200 0.400v5.300H5.900z" fill="#2a5c84"/></svg>
<svg class="ic" style="left:433.3px;top:544.0px" width="14" height="12" viewBox="0 0 14 12"><path d="M10 6.800V9.600a1.600 1.600 0 0 1-1.600 1.600H2.200A1.600 1.600 0 0 1 0.600 9.600V3.600A1.600 1.600 0 0 1 2.200 2H7.600" fill="none" stroke="#3d6b91" stroke-width="1"/><path d="M5.400 8l0.500-2 5.300-5.200 1.500 1.500-5.300 5.200z" fill="#2a5c84"/><path d="M6.500 6.900l4.700-4.600" stroke="#fff" stroke-width="0.500"/></svg>
<div class="t " style="left:167.6px;top:560.9px;--w:222.1px;letter-spacing:-0.583px">Nov 5, 2021 4:00 PM - Nov 5, 2021 5:00 PM</div>
<div class="t b" style="left:167.6px;top:588.8px;--w:55.9px;letter-spacing:-0.325px">Last Week</div>
<svg class="ic" style="left:393.6px;top:590.4px" width="12" height="12" viewBox="0 0 12 12"><path d="M8.100 3.250A4.200 4.200 0 1 0 9.100 8.200" fill="none" stroke="#2a5c84" stroke-width="1.800"/><path d="M11.200 0.400v5.300H5.900z" fill="#2a5c84"/></svg>
<svg class="ic" style="left:433.3px;top:590.0px" width="14" height="12" viewBox="0 0 14 12"><path d="M10 6.800V9.600a1.600 1.600 0 0 1-1.600 1.600H2.200A1.600 1.600 0 0 1 0.600 9.600V3.600A1.600 1.600 0 0 1 2.200 2H7.600" fill="none" stroke="#3d6b91" stroke-width="1"/><path d="M5.400 8l0.500-2 5.300-5.200 1.500 1.500-5.300 5.200z" fill="#2a5c84"/><path d="M6.500 6.900l4.700-4.600" stroke="#fff" stroke-width="0.500"/></svg>
<div class="t " style="left:167.6px;top:606.9px;--w:226.2px;letter-spacing:-0.570px">Oct 29, 2021 5:00 PM - Nov 5, 2021 5:00 PM</div>
<div class="card" style="left:162px;top:650px;width:298px;height:67px"></div>
<div class="t b" style="left:170.4px;top:661.8px;--w:130.6px;letter-spacing:-0.068px">Next Scheduled Update</div>
<svg class="ic" style="left:432.0px;top:663.0px" width="14" height="12" viewBox="0 0 14 12"><path d="M10 6.800V9.600a1.600 1.600 0 0 1-1.600 1.600H2.200A1.600 1.600 0 0 1 0.600 9.600V3.600A1.600 1.600 0 0 1 2.200 2H7.600" fill="none" stroke="#3d6b91" stroke-width="1"/><path d="M5.400 8l0.500-2 5.300-5.200 1.500 1.500-5.300 5.200z" fill="#2a5c84"/><path d="M6.500 6.900l4.700-4.600" stroke="#fff" stroke-width="0.500"/></svg>
<div class="t lk" style="left:170.4px;top:684.9px;--w:240.2px;letter-spacing:-0.344px">November 5, 2021 6:00:00 PM (US/Mountain)</div>
<div class="card" style="left:161px;top:732px;width:300px;height:29px;border-color:#b4c6d8"></div>
<div class="t " style="left:168.4px;top:739.8px;color:#222;--w:121.7px;letter-spacing:-0.247px">Recent Version History</div>
<svg class="ic" style="left:440px;top:740px" width="9" height="12" viewBox="0 0 9 12"><path d="M1.600 1.200L6.600 6 1.600 10.800" fill="none" stroke="#2a5c84" stroke-width="2.200"/></svg>
<div class="t lk" style="left:166.3px;top:766.7px;--w:130.6px;letter-spacing:-0.204px">Revert to old experience</div>
</div>
<div class="abs split" style="left:481px;top:45px;width:11px;height:1032px"></div>
<div class="t" style="left:482.900px;top:550.600px;font-size:16.500px;color:#2a5c84;letter-spacing:0;transform-origin:0 50%;transform:scaleX(0.800)">«</div>
<div id="editor" class="abs"></div>
<!--EDITOR-->
<div class="abs" style="left:493px;top:45px;width:1250px;height:31px;background:#fff;border-bottom:1px solid #c4c4c4"></div>
<div class="abs" style="left:713px;top:45px;width:1px;height:30px;background:#c8c8c8"></div>
<div class="abs" style="left:1085px;top:45px;width:1px;height:30px;background:#c8c8c8"></div>
<div class="abs" style="left:1225px;top:45px;width:1px;height:30px;background:#c8c8c8"></div>
<div class="abs" style="left:1447px;top:45px;width:1px;height:30px;background:#c8c8c8"></div>
<div class="abs" style="left:1486px;top:45px;width:1px;height:30px;background:#c8c8c8"></div>
<div class="abs" style="left:1525px;top:45px;width:1px;height:30px;background:#c8c8c8"></div>
<div class="abs" style="left:1597px;top:45px;width:1px;height:30px;background:#c8c8c8"></div>
<div class="abs" style="left:497px;top:48px;width:28px;height:24px;background:#067a5e;border-radius:4px"></div>
<svg class="ic" style="left:503px;top:52px" width="16" height="16" viewBox="0 0 16 16"><path d="M2.600 14.200Q5.600 14.200 5.400 11.700A5.200 5.200 0 1 1 10.600 11.700Q10.400 14.200 13.400 14.200" fill="none" stroke="#fff" stroke-width="2.300"/><path d="M1.800 11.200l1.800-2.600 1.600 3.600 1.400-1.800 1.600 1" fill="none" stroke="#d5efe6" stroke-width="0.900"/></svg>
<svg class="ic" style="left:535.200px;top:51.100px" width="18" height="18" viewBox="0 0 18 18"><g transform="rotate(-50 9 9)" fill="none" stroke="#333" stroke-width="1.400" stroke-linecap="round"><path d="M7.600 5.400H4.300a3.600 3.600 0 0 0 0 7.200h3.300M10.400 5.400h3.300a3.600 3.600 0 0 1 0 7.200h-3.300M6 9h6"/></g></svg>
<svg class="ic" style="left:570px;top:53px" width="16" height="14" viewBox="0 0 16 14"><rect x="0.650" y="0.650" width="14.700" height="12.700" fill="none" stroke="#333" stroke-width="1.300"/><path d="M1.200 13V10.200L5.400 5.900l3 3.100 2-1.800 4.400 3.600V13z" fill="#333"/><circle cx="11.500" cy="4.300" r="1.600" fill="#333"/></svg>
<svg class="ic" style="left:603px;top:52.500px" width="16" height="16" viewBox="0 0 16 16"><rect x="0.700" y="0.700" width="14.600" height="14.600" rx="1" fill="#fff" stroke="#333" stroke-width="1.400"/><path d="M0.700 1.900h14.600" stroke="#333" stroke-width="2.600"/><path d="M0.700 7.300h14.600M0.700 11.300h14.600M5.600 3v12.300M10.400 3v12.300" stroke="#333" stroke-width="1.300"/></svg>
<svg class="ic" style="left:628.5px;top:57.5px" width="9" height="6" viewBox="0 0 9 6"><path d="M0.800 0.800L4.500 4.600 8.200 0.800" fill="none" stroke="#333" stroke-width="1.300"/></svg>
<svg class="ic" style="left:650px;top:54px" width="21" height="12" viewBox="0 0 21 12"><path d="M3 6h15" stroke="#000" stroke-width="2.400"/><path d="M0 6l5.400-4.600v9.200zM21 6l-5.400-4.600v9.200z" fill="#000"/></svg>
<svg class="ic" style="left:684px;top:50px" width="20" height="20" viewBox="0 0 20 20"><path d="M3.500 0.500v4.200h15v-4.200M3.500 19.500v-4.200h15v4.200" fill="none" stroke="#333" stroke-width="1.300"/><path d="M0.300 7.400l2.800 2.600-2.800 2.600z" fill="#333"/><path d="M4.600 10h3.600M9.800 10h3.600M15 10h3.600" stroke="#333" stroke-width="1.300"/></svg>
<div class="t " style="left:726.0px;top:52.0px;font-size:13.400px;letter-spacing:0;color:#333;--w:60.500px;letter-spacing:-0.227px">Paragraph</div>
<svg class="ic" style="left:818.0px;top:57.5px" width="9" height="6" viewBox="0 0 9 6"><path d="M0.800 0.800L4.500 4.600 8.200 0.800" fill="none" stroke="#333" stroke-width="1.300"/></svg>
<div class="t " style="left:848.0px;top:49.0px;font-size:17px;letter-spacing:0;color:#333;line-height:20px;height:20px">A</div>
<div class="abs" style="left:848px;top:67.600px;width:13.500px;height:1.300px;background:#333"></div>
<svg class="ic" style="left:872.5px;top:57.5px" width="9" height="6" viewBox="0 0 9 6"><path d="M0.800 0.800L4.500 4.600 8.200 0.800" fill="none" stroke="#333" stroke-width="1.300"/></svg>
<div class="abs" style="left:896px;top:50.500px;width:16px;height:17.500px;background:#333;border-radius:1.500px"></div>
<div class="t " style="left:898.3px;top:49.5px;font-size:16.500px;letter-spacing:0;color:#fff;line-height:20px;height:20px">A</div>
<svg class="ic" style="left:920.5px;top:57.5px" width="9" height="6" viewBox="0 0 9 6"><path d="M0.800 0.800L4.500 4.600 8.200 0.800" fill="none" stroke="#333" stroke-width="1.300"/></svg>
<div class="t " style="left:943.5px;top:50.0px;font-size:18.500px;letter-spacing:0;color:#333;line-height:20px;height:20px">A</div>
<svg class="ic" style="left:954px;top:52.800px" width="7" height="7.300" viewBox="0 0 7 7.300"><path d="M0 0.500h7M0 2.600h7M1.400 4.700h5.600M2.800 6.800h4.200" stroke="#333" stroke-width="0.900"/></svg>
<svg class="ic" style="left:969.2px;top:57.5px" width="9" height="6" viewBox="0 0 9 6"><path d="M0.800 0.800L4.500 4.600 8.200 0.800" fill="none" stroke="#333" stroke-width="1.300"/></svg>
<div class="t " style="left:990.5px;top:50.0px;font-size:18.500px;letter-spacing:0;color:#333;line-height:20px;height:20px">A</div>
<svg class="ic" style="left:1004.100px;top:52.400px" width="8" height="15" viewBox="0 0 8 15"><path d="M4 1.500v12" stroke="#333" stroke-width="1.200"/><path d="M1.800 3.200L4 0.900l2.200 2.300M1.800 11.800L4 14.100l2.200-2.300" fill="none" stroke="#333" stroke-width="1.200"/></svg>
<svg class="ic" style="left:1018.5px;top:57.5px" width="9" height="6" viewBox="0 0 9 6"><path d="M0.800 0.800L4.500 4.600 8.200 0.800" fill="none" stroke="#333" stroke-width="1.300"/></svg>
<svg class="ic" style="left:1039.500px;top:50px" width="21" height="20" viewBox="0 0 21 20"><path d="M7 18.300H2.200a1.500 1.500 0 0 1-1.500-1.500V2.200A1.500 1.500 0 0 1 2.200 0.700H15a1.500 1.500 0 0 1 1.500 1.500v8.600" fill="none" stroke="#333" stroke-width="1.300"/><path d="M3.600 4.400h1.400M6.400 4.400h6.600M5.400 7h1.400M8.200 7h5M7.200 9.600h1.400M10 9.600h3.600" stroke="#333" stroke-width="1.100"/><path d="M12.200 12.400l-3.200 3.200 3.200 3.200M16.800 12.400l3.200 3.200-3.200 3.200" fill="none" stroke="#333" stroke-width="1.400"/></svg>
<svg class="ic" style="left:1068.5px;top:57.5px" width="9" height="6" viewBox="0 0 9 6"><path d="M0.800 0.800L4.500 4.600 8.200 0.800" fill="none" stroke="#333" stroke-width="1.300"/></svg>
<div class="t " style="left:1098.5px;top:50.0px;font-size:18px;font-weight:bold;letter-spacing:0;color:#333;line-height:20px;height:20px">B</div>
<div class="t " style="left:1134.5px;top:50.0px;font-size:18px;font-style:italic;font-family:'Liberation Serif',serif;letter-spacing:0;color:#333;line-height:20px;height:20px">I</div>
<div class="t " style="left:1166.8px;top:49.0px;font-size:15.500px;letter-spacing:0;color:#333;line-height:20px;height:20px">U</div>
<div class="abs" style="left:1165.500px;top:67.500px;width:14px;height:1.300px;background:#333"></div>
<div class="t " style="left:1200.0px;top:50.0px;font-size:17px;letter-spacing:0;color:#333;line-height:20px;height:20px">S</div>
<div class="abs" style="left:1198.500px;top:59.800px;width:14px;height:1.300px;background:#333"></div>
<svg class="ic" style="left:1236.500px;top:53px" width="16" height="14" viewBox="0 0 16 14"><path d="M0 1h16M0 5h11M0 9h16M0 13h11" stroke="#333" stroke-width="1.300"/></svg>
<svg class="ic" style="left:1262.2px;top:57.5px" width="9" height="6" viewBox="0 0 9 6"><path d="M0.800 0.800L4.500 4.600 8.200 0.800" fill="none" stroke="#333" stroke-width="1.300"/></svg>
<svg class="ic" style="left:1285px;top:53px" width="18" height="14" viewBox="0 0 18 14"><path d="M0.500 1h17M7 7h10.500M0.500 13h17" stroke="#bbb" stroke-width="1.300"/><path d="M0.300 7l3.400-2.600v5.200z" fill="#bbb"/><path d="M3 7h3" stroke="#bbb" stroke-width="1"/></svg>
<svg class="ic" style="left:1318.500px;top:53px" width="18" height="14" viewBox="0 0 18 14"><path d="M0.500 1h17M7 7h10.500M0.500 13h17" stroke="#333" stroke-width="1.300"/><path d="M4.200 7L0.600 4.200v5.600z" fill="#333"/></svg>
<svg class="ic" style="left:1350.500px;top:52px" width="19" height="16" viewBox="0 0 19 16"><path d="M7.500 3.600h11M7.500 12.400h11" stroke="#333" stroke-width="1.400"/><text x="0.500" y="6" font-size="6.500" font-weight="bold" font-family="Liberation Sans,sans-serif" fill="#333">1</text><text x="0.500" y="15.200" font-size="6.500" font-weight="bold" font-family="Liberation Sans,sans-serif" fill="#333">2</text></svg>
<svg class="ic" style="left:1380.5px;top:57.5px" width="9" height="6" viewBox="0 0 9 6"><path d="M0.800 0.800L4.500 4.600 8.200 0.800" fill="none" stroke="#333" stroke-width="1.300"/></svg>
<svg class="ic" style="left:1402px;top:52px" width="19" height="16" viewBox="0 0 19 16"><path d="M6.500 3.600h11.500M6.500 12.400h11.500" stroke="#333" stroke-width="1.400"/><circle cx="2" cy="3.600" r="1.500" fill="#333"/><circle cx="2" cy="12.400" r="1.500" fill="#333"/></svg>
<svg class="ic" style="left:1430.5px;top:57.5px" width="9" height="6" viewBox="0 0 9 6"><path d="M0.800 0.800L4.500 4.600 8.200 0.800" fill="none" stroke="#333" stroke-width="1.300"/></svg>
<div class="t " style="left:1460.0px;top:50.0px;font-size:19px;font-style:italic;font-family:'Liberation Serif',serif;letter-spacing:0;color:#bbb;line-height:20px;height:20px">T</div>
<div class="abs" style="left:1459.500px;top:67.500px;width:8px;height:1px;background:#bbb"></div>
<svg class="ic" style="left:1470px;top:62.500px" width="6" height="6" viewBox="0 0 6 6"><path d="M0.500 0.500l5 5M5.500 0.500l-5 5" stroke="#bbb" stroke-width="1.100"/></svg>
<div class="t " style="left:1495.5px;top:49.3px;font-size:9.500px;font-weight:bold;letter-spacing:0;color:#333;line-height:10px;height:10px;--w:21px;letter-spacing:0.667px">PDF</div>
<svg class="ic" style="left:1500.500px;top:60px" width="11" height="10" viewBox="0 0 11 10"><path d="M3.600 0h3.800v4.400h3.400L5.500 9.800 0.200 4.400h3.400z" fill="#111"/></svg>
<svg class="ic" style="left:1536px;top:53px" width="17" height="13" viewBox="0 0 17 13"><path d="M5.600 0.800L1.200 5l4.400 4.200M1.200 5h9.600a4.400 3.700 0 0 1 0 7.400h-1.600" fill="none" stroke="#333" stroke-width="1.400"/></svg>
<svg class="ic" style="left:1569px;top:53px" width="17" height="13" viewBox="0 0 17 13"><path d="M11.400 0.800L15.800 5l-4.400 4.200M15.800 5H6.200a4.400 3.700 0 0 0 0 7.400h1.600" fill="none" stroke="#bbb" stroke-width="1.400"/></svg>
<svg class="ic" style="left:1607px;top:50px" width="20" height="20" viewBox="0 0 20 20"><path d="M19.500 1H1v18.500" fill="none" stroke="#999" stroke-width="1.800"/><path d="M19 3v16H3" fill="none" stroke="#aaa" stroke-width="1.400" stroke-dasharray="1.600 1.800"/></svg>
<div class="abs" style="left:501px;top:106px;width:1232px;height:71px;background:#d1d5d8;border:1px solid #b4b4b4"></div>
<div class="t " style="left:949.0px;top:132.8px;font-size:24.500px;font-weight:bold;color:#28324e;line-height:30px;height:30px;letter-spacing:0;--w:337px;letter-spacing:0.122px">Executive Site Status Report</div>
<div class="abs" style="left:501px;top:189px;width:1233px;height:838px;background:#efefef;border:1px solid #bdbdbd"></div>
<div class="abs" style="left:502px;top:190px;width:1231px;height:64px;background:#29314f"></div>
<div class="abs" style="left:502px;top:629px;width:1231px;height:65px;background:#29314f"></div>
<div class="abs" style="left:502px;top:628px;width:1231px;height:1px;background:#dadada"></div>
<div class="abs" style="left:1117px;top:190px;width:1px;height:837px;background:#b8b8b8"></div>
<div class="t " style="left:507.5px;top:214.5px;font-size:20.500px;font-weight:bold;color:#fff;line-height:26px;height:26px;letter-spacing:0;--w:92.300px;letter-spacing:0.295px;border-bottom:2px solid rgba(42,92,132,0.850);height:25px">Site View</div>
<div class="t " style="left:1123.8px;top:214.5px;font-size:20.500px;font-weight:bold;color:#fff;line-height:26px;height:26px;letter-spacing:0;--w:187px;letter-spacing:0.327px;border-bottom:2px solid rgba(255,255,255,0.850);height:25px">Production by Site</div>
<div class="t " style="left:507.5px;top:654.2px;font-size:20.500px;font-weight:bold;color:#fff;line-height:26px;height:26px;letter-spacing:0;--w:102.400px;letter-spacing:0.215px">Site Notes</div>
<div class="t " style="left:1124.0px;top:654.2px;font-size:20.500px;font-weight:bold;color:#fff;line-height:26px;height:26px;letter-spacing:0;--w:44.200px;letter-spacing:-0.345px">KPIs</div>
<div class="abs" style="left:509px;top:263px;width:605px;height:340px;background:#fff;border:1px solid #dcdcdc"></div>
<div class="abs" style="left:516px;top:265px;width:591px;height:18px;background:#e9ecef"></div>
<div class="t " style="left:524.7px;top:268.5px;font-size:6.800px;letter-spacing:0;color:#777;line-height:10px;height:10px">Company</div>
<div class="abs" style="left:516.3px;top:294.4px;width:234.7px;height:144.5px;background:linear-gradient(135deg,#189750 0%,#2a9d5e 40%,#6bb98f 100%);border-radius:1px"></div>
<div class="t " style="left:520.9px;top:300.1px;font-size:8.600px;letter-spacing:0;color:#fff;line-height:11px;height:11px">Site 1</div>
<div class="t " style="left:520.9px;top:313.7px;font-size:6.600px;font-weight:bold;letter-spacing:0;--w:65.600px;letter-spacing:0.205px;color:#fff;line-height:9px;height:9px">Monthly Production</div>
<div class="t " style="left:526.3px;top:324.1px;font-size:6.500px;font-weight:bold;letter-spacing:0;color:#fff;line-height:9px;height:9px">Value at End: 5948.5 kg</div>
<div class="abs" style="left:753.0px;top:294.4px;width:234.7px;height:144.5px;background:linear-gradient(135deg,#189750 0%,#2a9d5e 40%,#6bb98f 100%);border-radius:1px"></div>
<div class="t " style="left:757.6px;top:300.1px;font-size:8.600px;letter-spacing:0;color:#fff;line-height:11px;height:11px">Site 4</div>
<div class="t " style="left:757.6px;top:313.7px;font-size:6.600px;font-weight:bold;letter-spacing:0;--w:65.600px;letter-spacing:0.205px;color:#fff;line-height:9px;height:9px">Monthly Production</div>
<div class="t " style="left:763.0px;top:324.1px;font-size:6.500px;font-weight:bold;letter-spacing:0;color:#fff;line-height:9px;height:9px">Value at End: 1535.9 kg</div>
<div class="abs" style="left:989.8px;top:294.4px;width:116.5px;height:289.8px;background:linear-gradient(135deg,#ff0909 0%,#ff2020 45%,#ff6565 100%);border-radius:1px"></div>
<div class="t " style="left:994.4px;top:300.1px;font-size:8.600px;letter-spacing:0;color:#fff;line-height:11px;height:11px">Site 6</div>
<div class="t " style="left:994.4px;top:313.7px;font-size:6.600px;font-weight:bold;letter-spacing:0;--w:65.600px;letter-spacing:0.205px;color:#fff;line-height:9px;height:9px">Monthly Production</div>
<div class="t " style="left:999.8px;top:324.1px;font-size:6.500px;font-weight:bold;letter-spacing:0;color:#fff;line-height:9px;height:9px">Value at End: 1803.2 kg</div>
<div class="abs" style="left:516.3px;top:440.5px;width:234.7px;height:143.7px;background:linear-gradient(135deg,#189750 0%,#2a9d5e 40%,#6bb98f 100%);border-radius:1px"></div>
<div class="t " style="left:520.9px;top:446.2px;font-size:8.600px;letter-spacing:0;color:#fff;line-height:11px;height:11px">Site 2</div>
<div class="t " style="left:520.9px;top:459.8px;font-size:6.600px;font-weight:bold;letter-spacing:0;--w:65.600px;letter-spacing:0.205px;color:#fff;line-height:9px;height:9px">Monthly Production</div>
<div class="t " style="left:526.3px;top:470.2px;font-size:6.500px;font-weight:bold;letter-spacing:0;color:#fff;line-height:9px;height:9px">Value at End: 574.86 kg</div>
<div class="abs" style="left:753.0px;top:440.5px;width:234.7px;height:143.7px;background:linear-gradient(135deg,#ff0909 0%,#ff2020 45%,#ff6565 100%);border-radius:1px"></div>
<div class="t " style="left:757.6px;top:446.2px;font-size:8.600px;letter-spacing:0;color:#fff;line-height:11px;height:11px">Site 5</div>
<div class="t " style="left:757.6px;top:459.8px;font-size:6.600px;font-weight:bold;letter-spacing:0;--w:65.600px;letter-spacing:0.205px;color:#fff;line-height:9px;height:9px">Monthly Production</div>
<div class="t " style="left:763.0px;top:470.2px;font-size:6.500px;font-weight:bold;letter-spacing:0;color:#fff;line-height:9px;height:9px">Value at End: 1187.1 kg</div>
<div class="t " style="left:530.0px;top:592.3px;font-size:5.800px;letter-spacing:0;color:#999;line-height:8px;height:8px;--w:67.600px;letter-spacing:0.148px">11/5/2021 4:00 PM &#160;MDT</div>
<div class="t " style="left:1036.0px;top:592.3px;font-size:5.800px;letter-spacing:0;color:#999;line-height:8px;height:8px;--w:67.600px;letter-spacing:0.148px">11/5/2021 5:00 PM &#160;MDT</div>
<div class="abs" style="left:1125px;top:263px;width:605px;height:340px;background:#fff;border:1px solid #dcdcdc"></div>
<svg class="ic" style="left:1126px;top:264px" width="603" height="338" viewBox="1126 264 603 338" font-family="DejaVu Sans,Liberation Sans,sans-serif">
<path d="M1186.500 281.500V554.500H1668.700" fill="none" stroke="#ccd6eb" stroke-width="1"/>
<text x="1174" y="284.7" text-anchor="end" font-size="8.800" fill="#666">50k</text>
<text x="1174" y="338.9" text-anchor="end" font-size="8.800" fill="#666">40k</text>
<text x="1174" y="393.6" text-anchor="end" font-size="8.800" fill="#666">30k</text>
<text x="1174" y="447.9" text-anchor="end" font-size="8.800" fill="#666">20k</text>
<text x="1174" y="502.6" text-anchor="end" font-size="8.800" fill="#666">10k</text>
<text x="1174" y="556.9" text-anchor="end" font-size="8.800" fill="#666">0</text>
<text transform="translate(1147.600 417.200) rotate(-90)" text-anchor="middle" font-size="8.400" letter-spacing="0.450" fill="#666">Monthly Producti…</text>
<text x="1227.0" y="570" text-anchor="middle" font-size="8.600" fill="#666">Site 1</text>
<rect x="1203.50" y="338.1" width="2.600" height="216.0" fill="#f4739a"/><rect x="1207.48" y="350.7" width="2.600" height="203.4" fill="#6b95bd"/><rect x="1211.47" y="338.1" width="2.600" height="216.0" fill="#7030a0"/><rect x="1215.45" y="344.0" width="2.600" height="210.1" fill="#92d050"/><rect x="1219.44" y="337.0" width="2.600" height="217.1" fill="#e0408a"/><rect x="1223.42" y="344.0" width="2.600" height="210.1" fill="#b5658a"/><rect x="1227.41" y="337.0" width="2.600" height="217.1" fill="#d4a84b"/><rect x="1231.39" y="337.0" width="2.600" height="217.1" fill="#9b1f45"/><rect x="1235.38" y="345.0" width="2.600" height="209.1" fill="#00aeef"/><rect x="1239.37" y="337.0" width="2.600" height="217.1" fill="#ff0000"/><rect x="1243.35" y="344.0" width="2.600" height="210.1" fill="#2db5a0"/><rect x="1247.34" y="337.0" width="2.600" height="217.1" fill="#3b4fa0"/>
<text x="1307.2" y="570" text-anchor="middle" font-size="8.600" fill="#666">Site 2</text>
<rect x="1283.75" y="536.0" width="2.600" height="18.1" fill="#f4739a"/><rect x="1287.73" y="537.8" width="2.600" height="16.3" fill="#6b95bd"/><rect x="1291.72" y="536.0" width="2.600" height="18.1" fill="#7030a0"/><rect x="1295.70" y="537.8" width="2.600" height="16.3" fill="#92d050"/><rect x="1299.69" y="536.0" width="2.600" height="18.1" fill="#e0408a"/><rect x="1303.67" y="537.8" width="2.600" height="16.3" fill="#b5658a"/><rect x="1307.66" y="536.3" width="2.600" height="17.8" fill="#d4a84b"/><rect x="1311.64" y="536.7" width="2.600" height="17.4" fill="#9b1f45"/><rect x="1315.63" y="536.7" width="2.600" height="17.4" fill="#00aeef"/><rect x="1319.62" y="536.7" width="2.600" height="17.4" fill="#ff0000"/><rect x="1323.60" y="536.7" width="2.600" height="17.4" fill="#2db5a0"/><rect x="1327.59" y="536.7" width="2.600" height="17.4" fill="#3b4fa0"/>
<text x="1387.5" y="570" text-anchor="middle" font-size="8.600" fill="#666">Site 3</text>
<rect x="1364.00" y="499.7" width="2.600" height="54.4" fill="#f4739a"/><rect x="1367.98" y="503.0" width="2.600" height="51.1" fill="#6b95bd"/><rect x="1371.97" y="499.7" width="2.600" height="54.4" fill="#7030a0"/><rect x="1375.95" y="501.4" width="2.600" height="52.7" fill="#92d050"/><rect x="1379.94" y="499.7" width="2.600" height="54.4" fill="#e0408a"/><rect x="1383.92" y="501.4" width="2.600" height="52.7" fill="#b5658a"/><rect x="1387.91" y="499.7" width="2.600" height="54.4" fill="#d4a84b"/><rect x="1391.89" y="499.7" width="2.600" height="54.4" fill="#9b1f45"/><rect x="1395.88" y="501.4" width="2.600" height="52.7" fill="#00aeef"/><rect x="1399.87" y="499.7" width="2.600" height="54.4" fill="#ff0000"/><rect x="1403.85" y="501.4" width="2.600" height="52.7" fill="#2db5a0"/><rect x="1407.84" y="499.7" width="2.600" height="54.4" fill="#3b4fa0"/>
<text x="1467.8" y="570" text-anchor="middle" font-size="8.600" fill="#666">Site 4</text>
<rect x="1444.25" y="486.9" width="2.600" height="67.2" fill="#f4739a"/><rect x="1448.23" y="490.0" width="2.600" height="64.1" fill="#6b95bd"/><rect x="1452.22" y="486.9" width="2.600" height="67.2" fill="#7030a0"/><rect x="1456.20" y="487.5" width="2.600" height="66.6" fill="#92d050"/><rect x="1460.19" y="486.9" width="2.600" height="67.2" fill="#e0408a"/><rect x="1464.17" y="487.5" width="2.600" height="66.6" fill="#b5658a"/><rect x="1468.16" y="487.5" width="2.600" height="66.6" fill="#d4a84b"/><rect x="1472.14" y="484.8" width="2.600" height="69.3" fill="#9b1f45"/><rect x="1476.13" y="489.4" width="2.600" height="64.7" fill="#00aeef"/><rect x="1480.12" y="484.8" width="2.600" height="69.3" fill="#ff0000"/><rect x="1484.10" y="489.4" width="2.600" height="64.7" fill="#2db5a0"/><rect x="1488.09" y="484.8" width="2.600" height="69.3" fill="#3b4fa0"/>
<text x="1548.0" y="570" text-anchor="middle" font-size="8.600" fill="#666">Site 5</text>
<rect x="1524.50" y="499.7" width="2.600" height="54.4" fill="#f4739a"/><rect x="1528.48" y="503.0" width="2.600" height="51.1" fill="#6b95bd"/><rect x="1532.47" y="499.7" width="2.600" height="54.4" fill="#7030a0"/><rect x="1536.45" y="501.4" width="2.600" height="52.7" fill="#92d050"/><rect x="1540.44" y="499.7" width="2.600" height="54.4" fill="#e0408a"/><rect x="1544.42" y="501.4" width="2.600" height="52.7" fill="#b5658a"/><rect x="1548.41" y="499.7" width="2.600" height="54.4" fill="#d4a84b"/><rect x="1552.39" y="499.7" width="2.600" height="54.4" fill="#9b1f45"/><rect x="1556.38" y="501.4" width="2.600" height="52.7" fill="#00aeef"/><rect x="1560.37" y="499.7" width="2.600" height="54.4" fill="#ff0000"/><rect x="1564.35" y="501.4" width="2.600" height="52.7" fill="#2db5a0"/><rect x="1568.34" y="499.7" width="2.600" height="54.4" fill="#3b4fa0"/>
<text x="1628.2" y="570" text-anchor="middle" font-size="8.600" fill="#666">Site 6</text>
<rect x="1604.75" y="488.1" width="2.600" height="66.0" fill="#f4739a"/><rect x="1608.73" y="493.9" width="2.600" height="60.2" fill="#6b95bd"/><rect x="1612.72" y="488.1" width="2.600" height="66.0" fill="#7030a0"/><rect x="1616.70" y="491.0" width="2.600" height="63.1" fill="#92d050"/><rect x="1620.69" y="488.1" width="2.600" height="66.0" fill="#e0408a"/><rect x="1624.67" y="491.0" width="2.600" height="63.1" fill="#b5658a"/><rect x="1628.66" y="488.6" width="2.600" height="65.5" fill="#d4a84b"/><rect x="1632.64" y="488.6" width="2.600" height="65.5" fill="#9b1f45"/><rect x="1636.63" y="491.0" width="2.600" height="63.1" fill="#00aeef"/><rect x="1640.62" y="488.6" width="2.600" height="65.5" fill="#ff0000"/><rect x="1644.60" y="491.0" width="2.600" height="63.1" fill="#2db5a0"/>
<text x="1517.100" y="293.600" font-size="10" fill="#ff0000" textLength="134" lengthAdjust="spacingAndGlyphs">Monthly Production by Site</text>
<rect x="1684.500" y="281.5" width="11.600" height="11.600" fill="#f4739a" stroke="#555" stroke-width="0.900"/><text x="1701.600" y="292.5" font-size="10" fill="#999">Jan</text>
<rect x="1684.500" y="297.0" width="11.600" height="11.600" fill="#6b95bd" stroke="#555" stroke-width="0.900"/><text x="1701.600" y="308.0" font-size="10" fill="#999">Feb</text>
<rect x="1684.500" y="312.5" width="11.600" height="11.600" fill="#7030a0" stroke="#555" stroke-width="0.900"/><text x="1701.600" y="323.5" font-size="10" fill="#999">Mar</text>
<rect x="1684.500" y="327.9" width="11.600" height="11.600" fill="#92d050" stroke="#555" stroke-width="0.900"/><text x="1701.600" y="338.9" font-size="10" fill="#999">Apr</text>
<rect x="1684.500" y="343.4" width="11.600" height="11.600" fill="#e0408a" stroke="#555" stroke-width="0.900"/><text x="1701.600" y="354.4" font-size="10" fill="#999">May</text>
<rect x="1684.500" y="358.9" width="11.600" height="11.600" fill="#b5658a" stroke="#555" stroke-width="0.900"/><text x="1701.600" y="369.9" font-size="10" fill="#999">Jun</text>
<rect x="1684.500" y="374.4" width="11.600" height="11.600" fill="#d4a84b" stroke="#555" stroke-width="0.900"/><text x="1701.600" y="385.4" font-size="10" fill="#999">Jul</text>
<rect x="1684.500" y="389.9" width="11.600" height="11.600" fill="#9b1f45" stroke="#555" stroke-width="0.900"/><text x="1701.600" y="400.9" font-size="10" fill="#999">Aug</text>
<rect x="1684.500" y="405.3" width="11.600" height="11.600" fill="#00aeef" stroke="#555" stroke-width="0.900"/><text x="1701.600" y="416.3" font-size="10" fill="#999">Sep</text>
<rect x="1684.500" y="420.8" width="11.600" height="11.600" fill="#ff0000" stroke="#555" stroke-width="0.900"/><text x="1701.600" y="431.8" font-size="10" fill="#999">Oct</text>
<rect x="1684.500" y="436.3" width="11.600" height="11.600" fill="#2db5a0" stroke="#555" stroke-width="0.900"/><text x="1701.600" y="447.3" font-size="10" fill="#999">Nov</text>
<rect x="1684.500" y="451.8" width="11.600" height="11.600" fill="#3b4fa0" stroke="#555" stroke-width="0.900"/><text x="1701.600" y="462.8" font-size="10" fill="#999">Dec</text>
</svg>
<div class="t " style="left:1156.3px;top:587.8px;font-size:9.300px;letter-spacing:0;color:#999;line-height:12px;height:12px;--w:111px;letter-spacing:-0.113px">12/31/2019 10:00 PM &#160;MST</div>
<div class="t " style="left:1604.5px;top:587.8px;font-size:9.300px;letter-spacing:0;color:#999;line-height:12px;height:12px;--w:111px;letter-spacing:-0.113px">12/30/2020 10:00 PM &#160;MST</div>
<div class="abs" style="left:507px;top:712px;width:605px;height:297px;border:1px solid #b0b0b0;background:#efefef"></div>
<div class="abs" style="left:508px;top:713px;width:93px;height:295px;background:#29314f"></div>
<div class="abs" style="left:601px;top:713px;width:1px;height:295px;background:#b0b0b0"></div>
<div class="t " style="left:513.6px;top:727.2px;font-size:15px;font-weight:bold;color:#fff;line-height:20px;height:20px;letter-spacing:0;--w:41.100px;letter-spacing:0.178px;border-bottom:1px solid #2a5c84;height:19px;">Site 1</div>
<div class="t " style="left:607.2px;top:719.2px;color:#333;--w:380.5px;letter-spacing:-0.073px">Low supply of raw material. Additional shipment expected on Monday.</div>
<div class="abs" style="left:508px;top:761px;width:603px;height:1px;background:#b0b0b0"></div>
<div class="t " style="left:513.6px;top:776.2px;font-size:15px;font-weight:bold;color:#fff;line-height:20px;height:20px;letter-spacing:0;--w:41.100px;letter-spacing:0.178px;">Site 2</div>
<div class="t " style="left:607.2px;top:768.2px;color:#333;--w:366.7px;letter-spacing:-0.045px">High demand - production operators being stretched with overtime.</div>
<div class="abs" style="left:508px;top:810px;width:603px;height:1px;background:#b0b0b0"></div>
<div class="t " style="left:513.6px;top:825.2px;font-size:15px;font-weight:bold;color:#fff;line-height:20px;height:20px;letter-spacing:0;--w:41.100px;letter-spacing:0.178px;">Site 3</div>
<div class="t " style="left:607.2px;top:817.2px;color:#333;--w:239.4px;letter-spacing:-0.102px">New engineering director to start next week.</div>
<div class="abs" style="left:508px;top:860px;width:603px;height:1px;background:#b0b0b0"></div>
<div class="t " style="left:513.6px;top:875.1px;font-size:15px;font-weight:bold;color:#fff;line-height:20px;height:20px;letter-spacing:0;--w:41.100px;letter-spacing:0.178px;">Site 4</div>
<div class="t " style="left:607.2px;top:867.1px;color:#333;--w:361.0px;letter-spacing:-0.168px">Expansion project underway - expected completion is August 2020.</div>
<div class="abs" style="left:508px;top:909px;width:603px;height:1px;background:#b0b0b0"></div>
<div class="t " style="left:513.6px;top:924.1px;font-size:15px;font-weight:bold;color:#fff;line-height:20px;height:20px;letter-spacing:0;--w:41.100px;letter-spacing:0.178px;">Site 5</div>
<div class="t " style="left:607.2px;top:916.1px;color:#333;--w:28.9px;letter-spacing:-0.248px">None</div>
<div class="abs" style="left:508px;top:959px;width:603px;height:1px;background:#b0b0b0"></div>
<div class="t " style="left:513.6px;top:973.9px;font-size:15px;font-weight:bold;color:#fff;line-height:20px;height:20px;letter-spacing:0;--w:41.100px;letter-spacing:0.178px;">Site 6</div>
<div class="t " style="left:607.2px;top:965.9px;color:#333;--w:311.5px;letter-spacing:-0.100px">Significant environmental spill yesterday reported to EPA.</div>
<div class="abs" style="left:1125px;top:702px;width:606px;height:185px;background:#fff;border:2px solid #dfe5ea"></div>
<div class="abs" style="left:1367.0px;top:725.0px;width:90.0px;height:19.0px;background:#ff0000"></div>
<div class="abs" style="left:1367.0px;top:745.0px;width:90.0px;height:19.0px;background:#ff0000"></div>
<div class="abs" style="left:1367.0px;top:765.0px;width:90.0px;height:19.0px;background:#ff0000"></div>
<div class="abs" style="left:1367.0px;top:785.0px;width:90.0px;height:20.0px;background:#ff0000"></div>
<div class="abs" style="left:1367.0px;top:806.0px;width:90.0px;height:19.0px;background:#ff0000"></div>
<div class="abs" style="left:1367.0px;top:826.0px;width:90.0px;height:19.0px;background:#ff0000"></div>
<div class="abs" style="left:1549.0px;top:826.0px;width:89.0px;height:19.0px;background:#ff0000"></div>
<div class="abs" style="left:1367.0px;top:846.0px;width:90.0px;height:19.0px;background:#ff0000"></div>
<div class="abs" style="left:1549.0px;top:846.0px;width:89.0px;height:19.0px;background:#ff0000"></div>
<div class="abs" style="left:1186.0px;top:866.0px;width:89.0px;height:20.0px;background:#ffdc55"></div>
<div class="abs" style="left:1276.0px;top:866.0px;width:90.0px;height:20.0px;background:#ffdc55"></div>
<div class="abs" style="left:1367.0px;top:866.0px;width:90.0px;height:20.0px;background:#ff0000"></div>
<div class="abs" style="left:1458.0px;top:866.0px;width:90.0px;height:20.0px;background:#ff0000"></div>
<div class="abs" style="left:1549.0px;top:866.0px;width:89.0px;height:20.0px;background:#ff0000"></div>
<div class="abs" style="left:1639.0px;top:866.0px;width:90.0px;height:20.0px;background:#ff0000"></div>
<div class="abs" style="left:1185px;top:704px;width:1px;height:181px;background:#e3e8ec"></div>
<div class="abs" style="left:1275px;top:704px;width:1px;height:181px;background:#e3e8ec"></div>
<div class="abs" style="left:1366px;top:704px;width:1px;height:181px;background:#e3e8ec"></div>
<div class="abs" style="left:1457px;top:704px;width:1px;height:181px;background:#e3e8ec"></div>
<div class="abs" style="left:1548px;top:704px;width:1px;height:181px;background:#e3e8ec"></div>
<div class="abs" style="left:1638px;top:704px;width:1px;height:181px;background:#e3e8ec"></div>
<div class="abs" style="left:1127px;top:724px;width:602px;height:1px;background:#e3e8ec"></div>
<div class="abs" style="left:1127px;top:744px;width:602px;height:1px;background:#e3e8ec"></div>
<div class="abs" style="left:1127px;top:764px;width:602px;height:1px;background:#e3e8ec"></div>
<div class="abs" style="left:1127px;top:784px;width:602px;height:1px;background:#e3e8ec"></div>
<div class="abs" style="left:1127px;top:805px;width:602px;height:1px;background:#e3e8ec"></div>
<div class="abs" style="left:1127px;top:825px;width:602px;height:1px;background:#e3e8ec"></div>
<div class="abs" style="left:1127px;top:845px;width:602px;height:1px;background:#e3e8ec"></div>
<div class="abs" style="left:1127px;top:865px;width:602px;height:1px;background:#e3e8ec"></div>
<div class="t " style="left:1192.8px;top:707.6px;font-size:10px;letter-spacing:0;color:#444;line-height:12px;height:12px;--w:75px;letter-spacing:-0.069px">Site 1 Production</div>
<div class="t " style="left:1283.3px;top:707.6px;font-size:10px;letter-spacing:0;color:#444;line-height:12px;height:12px;--w:75px;letter-spacing:-0.069px">Site 2 Production</div>
<div class="t " style="left:1374.1px;top:707.6px;font-size:10px;letter-spacing:0;color:#444;line-height:12px;height:12px;--w:75px;letter-spacing:-0.069px">Site 3 Production</div>
<div class="t " style="left:1464.9px;top:707.6px;font-size:10px;letter-spacing:0;color:#444;line-height:12px;height:12px;--w:75px;letter-spacing:-0.069px">Site 4 Production</div>
<div class="t " style="left:1555.7px;top:707.6px;font-size:10px;letter-spacing:0;color:#444;line-height:12px;height:12px;--w:75px;letter-spacing:-0.069px">Site 5 Production</div>
<div class="t " style="left:1646.2px;top:707.6px;font-size:10px;letter-spacing:0;color:#444;line-height:12px;height:12px;--w:75px;letter-spacing:-0.069px">Site 6 Production</div>
<div class="t " style="left:1130.2px;top:728.2px;font-size:9.600px;font-weight:bold;letter-spacing:0;color:#222;line-height:12px;height:12px;--w:51px;letter-spacing:0.298px">10/29/2021</div>
<div class="t " style="left:1188.8px;top:728.2px;font-size:9.200px;letter-spacing:0;line-height:12px;height:12px;color:#333;--w:33.7px;letter-spacing:-0.003px">100.0 %</div>
<div class="t " style="left:1279.0px;top:728.2px;font-size:9.200px;letter-spacing:0;line-height:12px;height:12px;color:#333;--w:33.7px;letter-spacing:-0.003px">100.0 %</div>
<div class="t " style="left:1369.9px;top:728.2px;font-size:9.200px;letter-spacing:0;line-height:12px;height:12px;color:#fff;font-weight:bold;--w:29.4px;letter-spacing:0.132px">23.4 %</div>
<div class="t " style="left:1460.5px;top:728.2px;font-size:9.200px;letter-spacing:0;line-height:12px;height:12px;color:#333;--w:33.7px;letter-spacing:-0.003px">100.0 %</div>
<div class="t " style="left:1551.5px;top:728.2px;font-size:9.200px;letter-spacing:0;line-height:12px;height:12px;color:#333;--w:33.7px;letter-spacing:-0.003px">100.0 %</div>
<div class="t " style="left:1642.0px;top:728.2px;font-size:9.200px;letter-spacing:0;line-height:12px;height:12px;color:#333;--w:28.8px;letter-spacing:0.032px">97.2 %</div>
<div class="t " style="left:1130.2px;top:748.5px;font-size:9.600px;font-weight:bold;letter-spacing:0;color:#222;line-height:12px;height:12px;--w:51px;letter-spacing:0.298px">10/30/2021</div>
<div class="t " style="left:1188.8px;top:748.5px;font-size:9.200px;letter-spacing:0;line-height:12px;height:12px;color:#333;--w:33.7px;letter-spacing:-0.003px">100.0 %</div>
<div class="t " style="left:1279.0px;top:748.5px;font-size:9.200px;letter-spacing:0;line-height:12px;height:12px;color:#333;--w:33.7px;letter-spacing:-0.003px">100.0 %</div>
<div class="t " style="left:1369.9px;top:748.5px;font-size:9.200px;letter-spacing:0;line-height:12px;height:12px;color:#fff;font-weight:bold;--w:25.1px;letter-spacing:0.320px">4.9 %</div>
<div class="t " style="left:1460.5px;top:748.5px;font-size:9.200px;letter-spacing:0;line-height:12px;height:12px;color:#333;--w:33.7px;letter-spacing:-0.003px">100.0 %</div>
<div class="t " style="left:1551.5px;top:748.5px;font-size:9.200px;letter-spacing:0;line-height:12px;height:12px;color:#333;--w:33.7px;letter-spacing:-0.003px">100.0 %</div>
<div class="t " style="left:1642.0px;top:748.5px;font-size:9.200px;letter-spacing:0;line-height:12px;height:12px;color:#333;--w:33.7px;letter-spacing:-0.003px">100.0 %</div>
<div class="t " style="left:1130.2px;top:768.7px;font-size:9.600px;font-weight:bold;letter-spacing:0;color:#222;line-height:12px;height:12px;--w:51px;letter-spacing:0.298px">10/31/2021</div>
<div class="t " style="left:1188.8px;top:768.7px;font-size:9.200px;letter-spacing:0;line-height:12px;height:12px;color:#333;--w:33.7px;letter-spacing:-0.003px">100.0 %</div>
<div class="t " style="left:1279.0px;top:768.7px;font-size:9.200px;letter-spacing:0;line-height:12px;height:12px;color:#333;--w:33.7px;letter-spacing:-0.003px">100.0 %</div>
<div class="t " style="left:1369.9px;top:768.7px;font-size:9.200px;letter-spacing:0;line-height:12px;height:12px;color:#fff;font-weight:bold;--w:29.4px;letter-spacing:0.132px">16.4 %</div>
<div class="t " style="left:1460.5px;top:768.7px;font-size:9.200px;letter-spacing:0;line-height:12px;height:12px;color:#333;--w:33.7px;letter-spacing:-0.003px">100.0 %</div>
<div class="t " style="left:1551.5px;top:768.7px;font-size:9.200px;letter-spacing:0;line-height:12px;height:12px;color:#333;--w:33.7px;letter-spacing:-0.003px">100.0 %</div>
<div class="t " style="left:1642.0px;top:768.7px;font-size:9.200px;letter-spacing:0;line-height:12px;height:12px;color:#333;--w:33.7px;letter-spacing:-0.003px">100.0 %</div>
<div class="t " style="left:1133.2px;top:788.8px;font-size:9.600px;font-weight:bold;letter-spacing:0;color:#222;line-height:12px;height:12px;--w:45px;letter-spacing:0.316px">11/1/2021</div>
<div class="t " style="left:1188.8px;top:788.8px;font-size:9.200px;letter-spacing:0;line-height:12px;height:12px;color:#333;--w:33.7px;letter-spacing:-0.003px">100.0 %</div>
<div class="t " style="left:1279.0px;top:788.8px;font-size:9.200px;letter-spacing:0;line-height:12px;height:12px;color:#333;--w:33.7px;letter-spacing:-0.003px">100.0 %</div>
<div class="t " style="left:1369.9px;top:788.8px;font-size:9.200px;letter-spacing:0;line-height:12px;height:12px;color:#fff;font-weight:bold;--w:25.1px;letter-spacing:0.320px">0.0 %</div>
<div class="t " style="left:1460.5px;top:788.8px;font-size:9.200px;letter-spacing:0;line-height:12px;height:12px;color:#333;--w:33.7px;letter-spacing:-0.003px">100.0 %</div>
<div class="t " style="left:1551.5px;top:788.8px;font-size:9.200px;letter-spacing:0;line-height:12px;height:12px;color:#333;--w:33.7px;letter-spacing:-0.003px">100.0 %</div>
<div class="t " style="left:1642.0px;top:788.8px;font-size:9.200px;letter-spacing:0;line-height:12px;height:12px;color:#333;--w:33.7px;letter-spacing:-0.003px">100.0 %</div>
<div class="t " style="left:1133.2px;top:809.1px;font-size:9.600px;font-weight:bold;letter-spacing:0;color:#222;line-height:12px;height:12px;--w:45px;letter-spacing:0.316px">11/2/2021</div>
<div class="t " style="left:1188.8px;top:809.1px;font-size:9.200px;letter-spacing:0;line-height:12px;height:12px;color:#333;--w:33.7px;letter-spacing:-0.003px">100.0 %</div>
<div class="t " style="left:1279.0px;top:809.1px;font-size:9.200px;letter-spacing:0;line-height:12px;height:12px;color:#333;--w:33.7px;letter-spacing:-0.003px">100.0 %</div>
<div class="t " style="left:1369.9px;top:809.1px;font-size:9.200px;letter-spacing:0;line-height:12px;height:12px;color:#fff;font-weight:bold;--w:29.4px;letter-spacing:0.132px">26.6 %</div>
<div class="t " style="left:1460.5px;top:809.1px;font-size:9.200px;letter-spacing:0;line-height:12px;height:12px;color:#333;--w:33.7px;letter-spacing:-0.003px">100.0 %</div>
<div class="t " style="left:1551.5px;top:809.1px;font-size:9.200px;letter-spacing:0;line-height:12px;height:12px;color:#333;--w:33.7px;letter-spacing:-0.003px">100.0 %</div>
<div class="t " style="left:1642.0px;top:809.1px;font-size:9.200px;letter-spacing:0;line-height:12px;height:12px;color:#333;--w:33.7px;letter-spacing:-0.003px">100.0 %</div>
<div class="t " style="left:1133.2px;top:829.5px;font-size:9.600px;font-weight:bold;letter-spacing:0;color:#222;line-height:12px;height:12px;--w:45px;letter-spacing:0.316px">11/3/2021</div>
<div class="t " style="left:1188.8px;top:829.5px;font-size:9.200px;letter-spacing:0;line-height:12px;height:12px;color:#333;--w:33.7px;letter-spacing:-0.003px">100.0 %</div>
<div class="t " style="left:1279.0px;top:829.5px;font-size:9.200px;letter-spacing:0;line-height:12px;height:12px;color:#333;--w:33.7px;letter-spacing:-0.003px">100.0 %</div>
<div class="t " style="left:1369.9px;top:829.5px;font-size:9.200px;letter-spacing:0;line-height:12px;height:12px;color:#fff;font-weight:bold;--w:29.4px;letter-spacing:0.132px">43.4 %</div>
<div class="t " style="left:1460.5px;top:829.5px;font-size:9.200px;letter-spacing:0;line-height:12px;height:12px;color:#333;--w:33.7px;letter-spacing:-0.003px">100.0 %</div>
<div class="t " style="left:1551.5px;top:829.5px;font-size:9.200px;letter-spacing:0;line-height:12px;height:12px;color:#fff;font-weight:bold;--w:25.1px;letter-spacing:0.320px">5.5 %</div>
<div class="t " style="left:1642.0px;top:829.5px;font-size:9.200px;letter-spacing:0;line-height:12px;height:12px;color:#333;--w:33.7px;letter-spacing:-0.003px">100.0 %</div>
<div class="t " style="left:1133.2px;top:849.5px;font-size:9.600px;font-weight:bold;letter-spacing:0;color:#222;line-height:12px;height:12px;--w:45px;letter-spacing:0.316px">11/4/2021</div>
<div class="t " style="left:1188.8px;top:849.5px;font-size:9.200px;letter-spacing:0;line-height:12px;height:12px;color:#333;--w:33.7px;letter-spacing:-0.003px">100.0 %</div>
<div class="t " style="left:1279.0px;top:849.5px;font-size:9.200px;letter-spacing:0;line-height:12px;height:12px;color:#333;--w:33.7px;letter-spacing:-0.003px">100.0 %</div>
<div class="t " style="left:1369.9px;top:849.5px;font-size:9.200px;letter-spacing:0;line-height:12px;height:12px;color:#fff;font-weight:bold;--w:29.4px;letter-spacing:0.132px">33.8 %</div>
<div class="t " style="left:1460.5px;top:849.5px;font-size:9.200px;letter-spacing:0;line-height:12px;height:12px;color:#333;--w:33.7px;letter-spacing:-0.003px">100.0 %</div>
<div class="t " style="left:1551.5px;top:849.5px;font-size:9.200px;letter-spacing:0;line-height:12px;height:12px;color:#fff;font-weight:bold;--w:25.1px;letter-spacing:0.320px">0.0 %</div>
<div class="t " style="left:1642.0px;top:849.5px;font-size:9.200px;letter-spacing:0;line-height:12px;height:12px;color:#333;--w:33.7px;letter-spacing:-0.003px">100.0 %</div>
<div class="t " style="left:1133.2px;top:869.7px;font-size:9.600px;font-weight:bold;letter-spacing:0;color:#222;line-height:12px;height:12px;--w:45px;letter-spacing:0.316px">11/5/2021</div>
<div class="t " style="left:1188.8px;top:869.7px;font-size:9.200px;letter-spacing:0;line-height:12px;height:12px;color:#333;--w:28.8px;letter-spacing:0.032px">66.7 %</div>
<div class="t " style="left:1279.0px;top:869.7px;font-size:9.200px;letter-spacing:0;line-height:12px;height:12px;color:#333;--w:28.8px;letter-spacing:0.032px">66.7 %</div>
<div class="t " style="left:1369.9px;top:869.7px;font-size:9.200px;letter-spacing:0;line-height:12px;height:12px;color:#fff;font-weight:bold;--w:29.4px;letter-spacing:0.132px">35.3 %</div>
<div class="t " style="left:1460.5px;top:869.7px;font-size:9.200px;letter-spacing:0;line-height:12px;height:12px;color:#fff;font-weight:bold;--w:25.1px;letter-spacing:0.320px">0.0 %</div>
<div class="t " style="left:1551.5px;top:869.7px;font-size:9.200px;letter-spacing:0;line-height:12px;height:12px;color:#fff;font-weight:bold;--w:25.1px;letter-spacing:0.320px">0.0 %</div>
<div class="t " style="left:1642.0px;top:869.7px;font-size:9.200px;letter-spacing:0;line-height:12px;height:12px;color:#fff;font-weight:bold;--w:29.4px;letter-spacing:0.132px">45.2 %</div>
<!--/EDITOR-->
<div id="foot" class="abs">
<div class="t" style="left:10.300px;top:4.400px;color:#333;--w:159.500px;letter-spacing:-0.538px">R54.0.1-v202109131625-BETA</div>
<div class="t" style="left:1639.200px;top:4.500px;color:#333;--w:63.500px;letter-spacing:-0.326px">Server load:</div>
<div class="abs" style="left:1708px;top:6.400px;width:24.500px;height:13.200px;background:#5cb85c;border-radius:3px"></div>
<div class="t" style="left:1713.500px;top:7px;font-size:9.500px;font-weight:bold;color:#fff;line-height:12px;height:12px;letter-spacing:-0.300px">0%</div>
</div>
</body>
</html>
